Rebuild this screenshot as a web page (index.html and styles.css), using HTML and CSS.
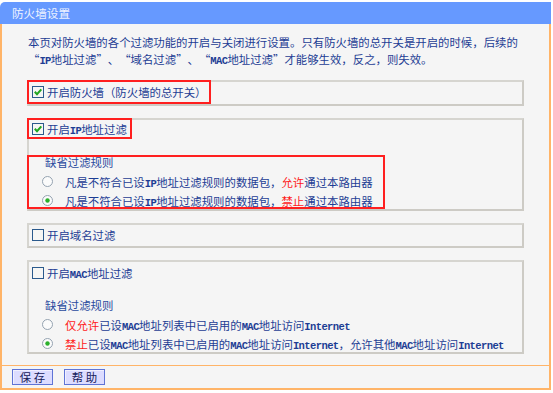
FILE: index.html
```html
<!DOCTYPE html>
<html lang="zh-CN">
<head>
<meta charset="utf-8">
<title>防火墙设置</title>
<link rel="stylesheet" href="styles.css">
</head>
<body>
<div class="panel">
  <div class="title">防火墙设置</div>
  <div class="content">
    <p class="desc">本页对防火墙的各个过滤功能的开启与关闭进行设置。只有防火墙的总开关是开启的时候，后续的<br><span class="q o">“</span><span class="en">IP</span>地址过滤<span class="q c">”</span>、<span class="q o">“</span>域名过滤<span class="q c">”</span>、<span class="q o">“</span><span class="en">MAC</span>地址过滤<span class="q c">”</span>才能够生效，反之，则失效。</p>

    <div class="box">
      <div class="head mark h24">
        <svg class="cb" width="12" height="12" viewBox="0 0 12 12"><rect x="0.5" y="0.5" width="11" height="11" fill="#f6f6f4" stroke="#2b5a8c"/><path d="M2.8 5.8 L5 8.2 L9.3 3.3" fill="none" stroke="#21a521" stroke-width="2"/></svg>
        <span>开启防火墙（防火墙的总开关）</span>
      </div>
    </div>

    <div class="box">
      <div class="head mark h21">
        <svg class="cb" width="12" height="12" viewBox="0 0 12 12"><rect x="0.5" y="0.5" width="11" height="11" fill="#f6f6f4" stroke="#2b5a8c"/><path d="M2.8 5.8 L5 8.2 L9.3 3.3" fill="none" stroke="#21a521" stroke-width="2"/></svg>
        <span>开启<span class="en">IP</span>地址过滤</span>
      </div>
      <div class="rules mark gap16">
        <div class="rules-title">缺省过滤规则</div>
        <div class="opt first">
          <svg class="rd" width="11" height="11" viewBox="0 0 11 11"><circle cx="5.5" cy="5.5" r="5" fill="#fbfbfb" stroke="#94a2b0"/></svg>
          <span>凡是不符合已设<span class="en">IP</span>地址过滤规则的数据包，<em>允许</em>通过本路由器</span>
        </div>
        <div class="opt">
          <svg class="rd" width="11" height="11" viewBox="0 0 11 11"><circle cx="5.5" cy="5.5" r="5" fill="#fbfbfb" stroke="#94a2b0"/><circle cx="5.5" cy="5.5" r="2.2" fill="#2bb02b"/></svg>
          <span>凡是不符合已设<span class="en">IP</span>地址过滤规则的数据包，<em>禁止</em>通过本路由器</span>
        </div>
      </div>
    </div>

    <div class="box">
      <div class="head h23">
        <svg class="cb" width="12" height="12" viewBox="0 0 12 12"><rect x="0.5" y="0.5" width="11" height="11" fill="#f6f6f4" stroke="#2b5a8c"/></svg>
        <span>开启域名过滤</span>
      </div>
    </div>

    <div class="box last">
      <div class="head h25">
        <svg class="cb" width="12" height="12" viewBox="0 0 12 12"><rect x="0.5" y="0.5" width="11" height="11" fill="#f6f6f4" stroke="#2b5a8c"/></svg>
        <span>开启<span class="en">MAC</span>地址过滤</span>
      </div>
      <div class="rules gap13">
        <div class="rules-title">缺省过滤规则</div>
        <div class="opt first">
          <svg class="rd" width="11" height="11" viewBox="0 0 11 11"><circle cx="5.5" cy="5.5" r="5" fill="#fbfbfb" stroke="#94a2b0"/></svg>
          <span><em>仅允许</em>已设<span class="en">MAC</span>地址列表中已启用的<span class="en">MAC</span>地址访问<span class="en">Internet</span></span>
        </div>
        <div class="opt">
          <svg class="rd" width="11" height="11" viewBox="0 0 11 11"><circle cx="5.5" cy="5.5" r="5" fill="#fbfbfb" stroke="#94a2b0"/><circle cx="5.5" cy="5.5" r="2.2" fill="#2bb02b"/></svg>
          <span><em>禁止</em>已设<span class="en">MAC</span>地址列表中已启用的<span class="en">MAC</span>地址访问<span class="en">Internet</span>，允许其他<span class="en">MAC</span>地址访问<span class="en">Internet</span></span>
        </div>
      </div>
    </div>
  </div>
  <div class="footer">
    <button class="btn">保 存</button>
    <button class="btn">帮 助</button>
  </div>
</div>
</body>
</html>
```

FILE: styles.css
```css
html, body {
  margin: 0;
  padding: 0;
  background: #ffffff;
}

body {
  font-family: "Noto Sans CJK SC", "Noto Sans", sans-serif;
  font-size: 11.4px;
  color: #1d3d94;
}

.en {
  font-family: "Liberation Mono", monospace;
  font-size: 10.5px;
  line-height: 1;
  letter-spacing: -0.6px;
  font-weight: bold;
}

.q {
  display: inline-block;
  width: 11.4px;
  line-height: 1;
}

.q.o { text-align: right; }
.q.c { text-align: left; }

.panel {
  width: 551px;
  margin-top: 2px;
}

.title {
  height: 22px;
  line-height: 22px;
  padding-left: 12px;
  background: #6699ff;
  color: #eef3ff;
  border-top-left-radius: 5px;
  font-size: 11.6px;
}

.content {
  background: #f5f5f5;
  border-left: 2px solid #ffb468;
  border-right: 2px solid #ffb468;
  padding-top: 10px;
  padding-bottom: 11px;
}

.desc {
  margin: 0 20px 12px 26px;
  height: 34px;
  line-height: 17px;
  white-space: nowrap;
}

.box {
  margin: 0 25px 12px 25px;
  border: 2px solid #d6d5d0;
  border-right-color: #cdcbc5;
  border-bottom-color: #cdcbc5;
}

.box.last {
  margin-bottom: 0;
}

.head {
  display: flex;
  align-items: center;
  width: fit-content;
  margin: -2px 0 0 -2px;
  border: 2px solid transparent;
  padding: 0 3px 0 3px;
  box-sizing: border-box;
  white-space: nowrap;
}

.head .cb {
  flex: none;
  margin-right: 3px;
}

.h21 { height: 21px; }
.h23 { height: 23px; }
.h24 { height: 24px; }
.h25 { height: 25px; }

.mark {
  border-color: #ff1f1f;
}

.rules {
  width: fit-content;
  margin-left: -2px;
  border: 2px solid transparent;
  padding: 0 10px 0 0;
}

.rules.mark {
  border-color: #ff1f1f;
}

.gap16 { margin-top: 16px; }
.gap13 { margin-top: 13px; }

.rules-title {
  height: 12px;
  line-height: 12px;
  margin-top: -1px;
  padding-left: 16px;
  color: #2a4b9e;
}

.opt {
  display: flex;
  align-items: center;
  height: 13px;
  margin-top: 6px;
  padding-left: 13px;
  white-space: nowrap;
}

.opt.first {
  margin-top: 7px;
}

.opt .rd {
  flex: none;
  margin-right: 12px;
}

.opt em {
  font-style: normal;
  color: #ff1a1a;
}

.footer {
  display: flex;
  gap: 11px;
  height: 25px;
  padding: 3px 0 0 10px;
  box-sizing: border-box;
  background: #f5f5f5;
  border-top: 1px solid #ffb468;
  border-left: 2px solid #ffb468;
  border-right: 2px solid #ffb468;
  border-bottom: 2px solid #ffb468;
}

.btn {
  width: 41px;
  height: 16px;
  padding: 0;
  margin: 0;
  font-family: "Noto Sans CJK SC", sans-serif;
  font-size: 11.4px;
  line-height: 14px;
  color: #16205a;
  background: #dcdcff;
  border: 1px solid #5f74d6;
  box-shadow: inset 1px 1px 0 #f0f0ff;
}
```
